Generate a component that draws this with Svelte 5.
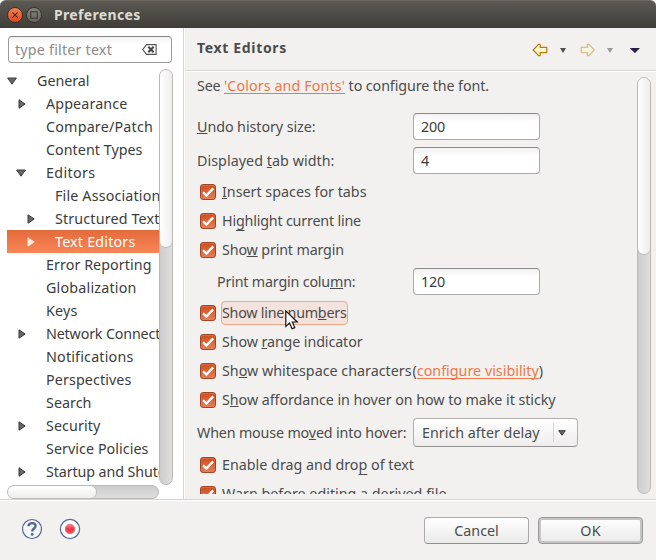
<script>
  const tree = [
    ['General', 0, 'open', 53],
    ['Appearance', 1, 'closed', 82],
    ['Compare/Patch', 1, '', 107.5],
    ['Content Types', 1, '', 97],
    ['Editors', 1, 'open', 50],
    ['File Associations', 2, '', 113],
    ['Structured Text', 2, 'closed', 105],
    ['Text Editors', 2, 'closed', 81],
    ['Error Reporting', 1, '', 106],
    ['Globalization', 1, '', 91],
    ['Keys', 1, '', 32],
    ['Network Connections', 1, 'closed', 142],
    ['Notifications', 1, '', 88],
    ['Perspectives', 1, '', 86],
    ['Search', 1, '', 46],
    ['Security', 1, 'closed', 55],
    ['Service Policies', 1, '', 103],
    ['Startup and Shutdown', 1, 'closed', 149]
  ];

  // Stretch or tighten a label by letter spacing so it occupies the given width.
  function fit(node, width) {
    const natural = node.getBoundingClientRect().width;
    const count = node.textContent.length;
    node.style.letterSpacing = (width - 0.5 - natural) / count + 'px';
  }
</script>

{#snippet label(pre, key, post, width, low = false)}
  <span class="label" use:fit={width}>{pre}<u class:low>{key}</u>{post}</span>
{/snippet}

{#snippet check(pre, key, post, width, low = false, focus = false)}
  <div class="check" class:focus>
    <svg width="16" height="16" viewBox="0 0 16 16">
      <rect x=".5" y=".5" width="15" height="15" rx="2.6" fill="url(#orange)" stroke="#9d452a" />
      <path d="M1.5 3Q1.5 1.5 3 1.5H13Q14.5 1.5 14.5 3" fill="none" stroke="#e67b51" opacity=".6" />
      <path d="M3.1 8.2 6.4 11.5 13.2 4.4" fill="none" stroke="#fff" stroke-width="2.3" />
    </svg>
    <span class="text">{@render label(pre, key, post, width, low)}</span>
  </div>
{/snippet}

{#snippet arrow(faded)}
  <svg class:faded width="16" height="14" viewBox="0 0 16 14">
    {#if faded}
      <path d="M15.3 7 10 1.4H8.3V4.4H2.2V9.6H8.3V12.6H10Z" fill="url(#yellow)" stroke="#b67b12" stroke-width="1.2" stroke-linejoin="round" />
    {:else}
      <path d="M1.2 7 6.5 1.4H8.2V4.4H14.8V9.6H8.2V12.6H6.5Z" fill="url(#yellow)" stroke="#b67b12" stroke-width="1.2" stroke-linejoin="round" />
    {/if}
  </svg>
{/snippet}

<svg class="defs" width="0" height="0">
  <defs>
    <linearGradient id="orange" x2="0" y2="1"><stop stop-color="#cc4b1b" /><stop offset="1" stop-color="#e78058" /></linearGradient>
    <linearGradient id="yellow" x2="0" y2="1"><stop stop-color="#fffdf0" /><stop offset="1" stop-color="#fdf0a8" /></linearGradient>
    <linearGradient id="red" x2="0" y2="1"><stop stop-color="#f98b83" /><stop offset=".5" stop-color="#ec3547" /><stop offset="1" stop-color="#f4565f" /></linearGradient>
  </defs>
</svg>

<div class="window">
  <header class="titlebar">
    <span class="orb close"><svg width="8" height="8" viewBox="0 0 8 8"><path d="M1.3 1.3 6.7 6.7M6.7 1.3 1.3 6.7" stroke="#59291a" stroke-width="1.1" /></svg></span>
    <span class="orb"><svg width="8" height="8" viewBox="0 0 8 8"><rect x=".8" y=".8" width="6.4" height="6.4" fill="none" stroke="#3a3934" stroke-width="1.1" /></svg></span>
    <strong><span use:fit={87}>Preferences</span></strong>
  </header>

  <div class="main">
    <aside>
      <div class="filter">
        <span use:fit={97.5}>type filter text</span>
        <svg width="15" height="11" viewBox="0 0 15 11">
          <path d="M4.5.6H14.1V10.4H4.5L.8 5.5Z" fill="#fff" stroke="#555" stroke-width="1.1" />
          <path d="M6.3 2.8 11.6 8.2M11.6 2.8 6.3 8.2" stroke="#444" stroke-width="2" />
        </svg>
      </div>
      <div class="scroller">
        <div class="tree">
          {#each tree as [name, depth, state, width]}
            <div class="node depth{depth}" class:selected={name === 'Text Editors'}>
              <span class="twist {state}">
                {#if state === 'open'}
                  <svg width="10" height="8" viewBox="0 0 10 8"><path d="M.6 1H9.4L5 7.2Z" fill="#686868" stroke="#3b3b3b" /></svg>
                {:else if state === 'closed'}
                  <svg width="8" height="10" viewBox="0 0 8 10"><path d="M1 .8V9.2L7.2 5Z" fill={name === 'Text Editors' ? '#fff0e5' : '#686868'} stroke={name === 'Text Editors' ? '#ffe5d4' : '#3b3b3b'} /></svg>
                {/if}
              </span>
              <span use:fit={width}>{name}</span>
            </div>
          {/each}
        </div>
        <div class="vbar"><i></i></div>
      </div>
      <div class="hbar"><i></i></div>
    </aside>

    <section>
      <div class="heading">
        <b><span use:fit={90.5}>Text Editors</span></b>
        <div class="tools">
          {@render arrow(false)}
          <svg class="drop first" width="6" height="5"><path d="M0 0H6L3 5Z" fill="#505050" /></svg>
          {@render arrow(true)}
          <svg class="drop second" width="6" height="5"><path d="M0 0H6L3 5Z" fill="#999" /></svg>
          <svg class="menu" width="10" height="5"><path d="M0 0H10L5 5Z" fill="#29203a" /><path d="M.5.4 4.5 4.5" stroke="#7043b4" /></svg>
        </div>
      </div>

      <div class="body">
        <div class="form">
          <div class="intro">
            <span use:fit={27.5}>See&nbsp;</span><a href="#fonts" use:fit={121.5}>'Colors and Fonts'</a><span use:fit={144.5}>&nbsp;to configure the font.</span>
          </div>
          <div class="field undo"><span class="name">{@render label('', 'U', 'ndo history size:', 119)}</span><div class="input"><span use:fit={24.5}>200</span></div></div>
          <div class="field tab"><span class="name">{@render label('Displayed ', 't', 'ab width:', 138)}</span><div class="input"><span>4</span></div></div>
          {@render check('', 'I', 'nsert spaces for tabs', 145)}
          {@render check('Hi', 'g', 'hlight current line', 139.5, true)}
          {@render check('Sho', 'w', ' print margin', 122.5)}
          <div class="field print"><span class="name">{@render label('Print margin colu', 'm', 'n:', 139)}</span><div class="input"><span use:fit={24.5}>120</span></div></div>
          {@render check('Show line num', 'b', 'ers', 125, false, true)}
          {@render check('Show ', 'r', 'ange indicator', 141)}
          <div class="compound">
            {@render check('Sh', 'o', 'w whitespace characters', 190)}
            <span class="visibility">(<a href="#visibility" use:fit={122.5}>configure visibility</a>)</span>
          </div>
          {@render check('S', 'h', 'ow affordance in hover on how to make it sticky', 334)}
          <div class="field hover">
            <span class="name">{@render label('When mouse mo', 'v', 'ed into hover:', 210)}</span>
            <div class="combo"><span use:fit={118}>Enrich after delay</span><div class="chev"><svg width="8" height="6" viewBox="0 0 8 6"><path d="M.7.7H7.3L4 5.2Z" fill="#686868" stroke="#3b3b3b" /></svg></div></div>
          </div>
          {@render check('Enable drag and dro', 'p', ' of text', 192.5, true)}
          {@render check('', '', 'Warn before editing a derived file', 225)}
        </div>
        <div class="vbar page"><i></i></div>
      </div>
    </section>
  </div>

  <footer>
    <svg width="22" height="22" viewBox="0 0 22 22">
      <circle cx="11" cy="11" r="9.5" fill="#f5f6f8" stroke="#566b91" stroke-width="1.2" />
      <path d="M7.4 8.3C7.6 4 14.7 4 14.6 8C14.6 10.5 11.2 10.5 11.2 13.4" fill="none" stroke="#53658a" stroke-width="2.3" />
      <circle cx="11.2" cy="16.4" r="1.4" fill="#53658a" />
    </svg>
    <svg class="record" width="22" height="22" viewBox="0 0 22 22">
      <circle cx="11" cy="11" r="9.6" fill="#fff" stroke="#566b91" stroke-width="1.2" />
      <circle cx="11" cy="11" r="4.7" fill="url(#red)" stroke="#e45a60" stroke-width=".8" />
    </svg>
    <div class="button cancel"><span use:fit={45}>Cancel</span></div>
    <div class="button ok"><span use:fit={21}>OK</span></div>
  </footer>

  <svg class="cursor" width="14" height="21" viewBox="0 0 14 21">
    <path d="M.8.9V16.4L4.5 13L7.1 18.8L9.8 17.6L7.3 12H12.2Z" fill="#fff" stroke="#111" stroke-width="1.2" />
  </svg>
</div>

<style>
  :global(body) { background: #f2f1f0; overflow: hidden; }
  .window { position: relative; display: flex; flex-direction: column; width: 656px; height: 560px; overflow: hidden; background: #f2f1f0; color: #4c4c4c; font: 14.3px/20px "Noto Sans", "Open Sans", sans-serif; }
  .window * { box-sizing: border-box; }
  .window span { white-space: nowrap; }
  svg { display: block; flex: none; }
  .defs { position: absolute; }
  .titlebar { flex: none; display: flex; align-items: center; height: 28px; padding: 1px 0 0 7px; background: linear-gradient(#5b5952, #3e3d38); border-top: 1px solid #6a6861; border-radius: 6px 6px 0 0; color: #dfdbd2; font-size: 14px; }
  .orb { display: flex; align-items: center; justify-content: center; width: 16px; height: 16px; margin: -1px 3px 0 0; border: 1px solid #35342f; border-radius: 50%; background: linear-gradient(#86857d, #65645d); }
  .close { background: linear-gradient(#f5815a, #df4a1a); }
  strong { margin-left: 9px; }
  .main { flex: none; display: flex; height: 471px; }
  aside { width: 184px; padding: 8px 0 0 7px; background: #fff; border-right: 1px solid #d5d3d1; }
  .filter { display: flex; align-items: center; justify-content: space-between; width: 164px; height: 27px; margin-left: 1px; padding: 0 14px 0 6px; border: 1px solid #9b9b9b; border-top-color: #858585; border-radius: 4px; background: linear-gradient(#f2f2f2, #fff 7px); color: #8c8c8c; }
  .scroller { display: flex; height: 416px; margin-top: 6px; }
  .tree { width: 152px; overflow: hidden; color: #3c3c3c; }
  .node { display: flex; align-items: center; height: 23px; }
  .twist { flex: none; display: flex; width: 30px; }
  .depth1 { padding-left: 9px; }
  .depth2 { padding-left: 18px; }
  .twist.closed { padding-left: 1.5px; }
  .selected { background: linear-gradient(#e56c3c, #f88556); border-top: 1px solid #df6938; color: #fff; }
  .vbar { width: 14px; border: 1px solid #bcb9b5; border-radius: 7px; background: linear-gradient(90deg, #cdcdcd, #dedede); }
  .vbar i { display: block; width: 12px; height: 177px; border-radius: 6px; background: linear-gradient(90deg, #fff, #eeedec); box-shadow: 0 1px 1px #bbb; }
  .hbar { width: 152px; height: 14px; border: 1px solid #bcb9b5; border-radius: 7px; background: linear-gradient(#cdcdcd, #dedede); }
  .hbar i { display: block; width: 88px; height: 12px; border-radius: 6px; background: linear-gradient(#fff, #eeedec); box-shadow: 1px 0 1px #bbb; }
  section { flex: 1; border-left: 1px solid #fff; }
  .heading { display: flex; justify-content: space-between; height: 43px; padding: 10px 16px 0 12px; border-bottom: 1px solid #dad8d6; box-shadow: 0 1px #fff; }
  .heading b { font-size: 14px; }
  .tools { display: flex; align-items: center; height: 24px; }
  .faded { opacity: .45; }
  .drop.first { margin: 0 13px 0 12px; }
  .drop.second { margin: 0 17px 0 12px; }
  .body { display: flex; justify-content: space-between; height: 423px; padding: 6px 5px 0 0; }
  .form { width: 440px; height: 417px; overflow: hidden; padding-left: 12px; }
  .page { height: 417px; }
  .page i { height: 176px; }
  .intro { display: flex; height: 20px; margin-top: -1px; }
  a { color: #f07746; white-space: nowrap; text-decoration: underline; text-decoration-thickness: 1px; text-underline-offset: 2px; text-decoration-skip-ink: none; }
  u { text-decoration-thickness: 1px; text-underline-offset: 1px; text-decoration-skip-ink: none; }
  u.low { text-underline-offset: 4px; }
  .field { display: flex; align-items: center; height: 27px; }
  .name { width: 216px; }
  .undo { margin-top: 17px; }
  .tab { margin: 7px 0 4px; }
  .print { margin: 4px 0; padding-left: 20px; }
  .print .name { width: 196px; }
  .input { width: 127px; height: 27px; padding: 3px 7px; border: 1px solid #aaa; border-top-color: #8b8b8b; border-radius: 4px; background: linear-gradient(#f1f1f1, #fff 8px); color: #3c3c3c; }
  .check { display: flex; align-items: center; height: 28px; margin-bottom: 1px; padding-left: 3px; }
  .text { display: flex; align-items: center; height: 24px; margin-left: 5px; padding-left: 1px; }
  .focus .text { width: 127px; padding-left: 0; border: 1px solid #f1a68c; border-radius: 4px; background: #f4e2dc; }
  .compound { display: flex; }
  .visibility { margin-left: 1px; line-height: 28px; }
  .hover { height: 29px; margin: 4px 0; }
  .combo { display: flex; align-items: center; justify-content: space-between; width: 165px; height: 29px; padding-left: 8px; border: 1px solid #b1afac; border-bottom-color: #929292; border-radius: 4px; background: linear-gradient(#fff, #eeedec); }
  .chev { display: flex; align-items: center; width: 24px; height: 19px; padding-left: 4px; border-left: 1px solid #d5d3d1; }
  footer { display: flex; height: 61px; padding: 17px 13px 0 21px; border-top: 1px solid #d5d3d1; box-shadow: inset 0 1px #fff; }
  footer > svg { margin-top: 1px; }
  .record { margin-left: 16px; }
  .button { display: flex; align-items: center; justify-content: center; width: 105px; height: 27px; border: 1px solid #aaa; border-bottom-color: #8e8e8e; border-radius: 4px; background: linear-gradient(#fff, #eaeae9); }
  .cancel { margin-left: auto; }
  .ok { margin-left: 9px; border-color: #999; box-shadow: inset 0 0 0 2px #c5c5c5; }
  .cursor { position: absolute; left: 285px; top: 310px; }
</style>
